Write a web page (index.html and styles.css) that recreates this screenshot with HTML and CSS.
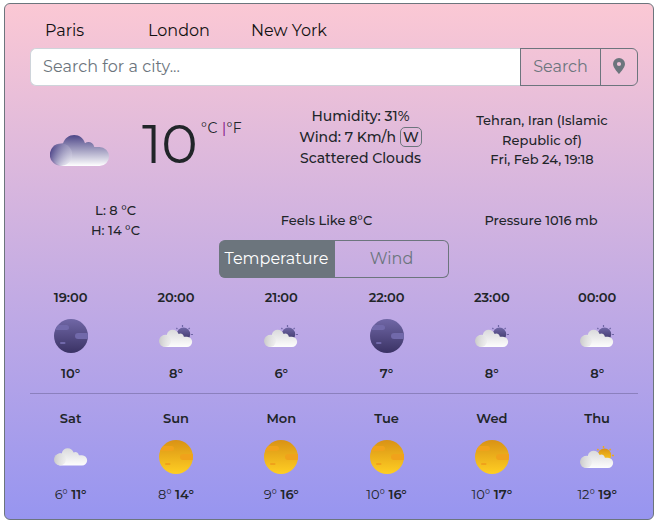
FILE: index.html
```html
<!DOCTYPE html>
<html lang="en">
<head>
<meta charset="utf-8">
<title>Weather</title>
<link rel="stylesheet" href="styles.css">
</head>
<body>
<svg class="defs" width="0" height="0" aria-hidden="true">
  <defs>
    <linearGradient id="night" x1="0" y1="0" x2="0" y2="1"><stop offset="0" stop-color="#7067a6"/><stop offset="1" stop-color="#3a3264"/></linearGradient>
    <linearGradient id="day" x1="0" y1="0" x2="0" y2="1"><stop offset="0" stop-color="#d99215"/><stop offset="1" stop-color="#ffcf23"/></linearGradient>
    <linearGradient id="white" gradientUnits="userSpaceOnUse" x1="0" y1="0" x2="0" y2="17"><stop offset="0" stop-color="#d9d9db"/><stop offset="1" stop-color="#fcfcfc"/></linearGradient>
    <linearGradient id="whiteSide"><stop offset="0" stop-color="#cacaca"/><stop offset="1" stop-color="#e9e9e9" stop-opacity=".5"/></linearGradient>
    <linearGradient id="dark" gradientUnits="userSpaceOnUse" x1="0" y1="0" x2="0" y2="31"><stop offset="0" stop-color="#4d4688"/><stop offset="1" stop-color="#ffffff"/></linearGradient>
    <linearGradient id="darkSide" x1="0" y1=".3" x2="1" y2=".65"><stop offset="0" stop-color="#463f84"/><stop offset="1" stop-color="#dcd9ea" stop-opacity=".3"/></linearGradient>
    <clipPath id="disc"><circle cx="17" cy="17" r="17"/></clipPath>
    <g id="patches" clip-path="url(#disc)"><rect x="-4" y="6" width="19" height="5" rx="2.5"/><rect x="21" y="14" width="18" height="6" rx="3"/><rect x="6" y="23" width="5.5" height="2" rx="1"/></g>
    <g id="cloud"><path fill="url(#white)" d="M6 17.5A6 6 0 0 1 7.7 5.4C8.5 2 11 .3 13.6.3c3 0 5 1.7 6 4.2 1.8-1 4.5-.7 5.3 2.7H28a5.15 5.15 0 0 1 0 10.3z"/><circle cx="6" cy="11.5" r="6" fill="url(#whiteSide)"/></g>
    <symbol id="moon" viewBox="0 0 34 34"><circle cx="17" cy="17" r="17" fill="url(#night)"/><use href="#patches" fill="#7169aa"/></symbol>
    <symbol id="sun" viewBox="0 0 34 34"><circle cx="17" cy="17" r="17" fill="url(#day)"/><use href="#patches" fill="#f0a21b"/></symbol>
    <symbol id="cloudy" viewBox="0 0 34 34"><use href="#cloud" y="8"/></symbol>
    <symbol id="cloud-night" viewBox="0 0 34 34"><path d="M23.5 6v2M17.4 9l1 1.2M30.7 9l-1.1 1.2M32 15.5h2" stroke="#7067a6" stroke-width="1.2"/><circle cx="24.5" cy="15.2" r="6.7" fill="url(#night)"/><use href="#cloud" y="10.5"/></symbol>
    <symbol id="cloud-day" viewBox="0 0 34 34"><path d="M23.5 6v2M17.4 9l1 1.2M30.7 9l-1.1 1.2M32 15.5h2" stroke="#efa91d" stroke-width="1.4"/><circle cx="24.5" cy="15.2" r="6.7" fill="url(#day)"/><use href="#cloud" y="10.5"/></symbol>
  </defs>
</svg>
<main class="card">
  <nav class="cities"><a>Paris</a><a>London</a><a>New York</a></nav>
  <form class="search">
    <input type="text" placeholder="Search for a city..." aria-label="City">
    <button type="button" class="go">Search</button>
    <button type="button" class="pin" aria-label="Current location"><svg width="12" height="16" viewBox="0 0 12 16"><path fill="currentColor" fill-rule="evenodd" d="M6 16S0 9.8 0 6a6 6 0 1 1 12 0c0 3.8-6 10-6 10zM6 8.1a2.1 2.1 0 1 0 0-4.2 2.1 2.1 0 0 0 0 4.2z"/></svg></button>
  </form>
  <section class="current">
    <svg class="now-icon" width="59" height="31" viewBox="0 0 59 31"><path fill="url(#dark)" d="M11 31A11.5 11.5 0 0 1 13 8.3C15 3 19 0 24.2 0 29.5 0 33.5 3.2 35 8.2c3-2.6 8.3-1.2 9.3 3.8H49.5a9.5 9.5 0 0 1 0 19z"/><circle cx="11" cy="19.7" r="11.2" fill="url(#darkSide)"/></svg>
    <div class="temp"><span class="degrees">10</span><span class="units">°C <i>|</i>°F</span></div>
    <div class="facts"><div>Humidity: 31%</div><div>Wind: 7 Km/h <span class="compass">W</span></div><div>Scattered Clouds</div></div>
    <div class="place"><div>Tehran, Iran (Islamic</div><div>Republic of)</div><div>Fri, Feb 24, 19:18</div></div>
  </section>
  <section class="extra">
    <div class="range"><div>L: 8 °C</div><div>H: 14 °C</div></div>
    <div class="feels">Feels Like 8°C</div>
    <div class="pressure">Pressure 1016 mb</div>
  </section>
  <div class="toggle"><button type="button" class="active">Temperature</button><button type="button">Wind</button></div>
  <section class="forecast hourly">
    <div><b>19:00</b><svg><use href="#moon"/></svg><b>10°</b></div>
    <div><b>20:00</b><svg><use href="#cloud-night"/></svg><b>8°</b></div>
    <div><b>21:00</b><svg><use href="#cloud-night"/></svg><b>6°</b></div>
    <div><b>22:00</b><svg><use href="#moon"/></svg><b>7°</b></div>
    <div><b>23:00</b><svg><use href="#cloud-night"/></svg><b>8°</b></div>
    <div><b>00:00</b><svg><use href="#cloud-night"/></svg><b>8°</b></div>
  </section>
  <hr>
  <section class="forecast daily">
    <div><b>Sat</b><svg><use href="#cloudy"/></svg><span>6° <b>11°</b></span></div>
    <div><b>Sun</b><svg><use href="#sun"/></svg><span>8° <b>14°</b></span></div>
    <div><b>Mon</b><svg><use href="#sun"/></svg><span>9° <b>16°</b></span></div>
    <div><b>Tue</b><svg><use href="#sun"/></svg><span>10° <b>16°</b></span></div>
    <div><b>Wed</b><svg><use href="#sun"/></svg><span>10° <b>17°</b></span></div>
    <div><b>Thu</b><svg><use href="#cloud-day"/></svg><span>12° <b>19°</b></span></div>
  </section>
</main>
</body>
</html>
```
FILE: styles.css
```css
* { box-sizing: border-box; }
body { margin: 0; padding: 3px 3px 3px 4px; background: #fff; color: #212529; font: 13px/20px Montserrat, Inter, "Open Sans", sans-serif; overflow: hidden; }
.defs { position: absolute; }
.card { width: 650px; height: 517px; padding: 0 15px 0 25px; border: 1px solid #6c757d; border-radius: 6px; background: linear-gradient(to top, #9795f0, #fbc8d4); }
.cities { display: grid; grid-template-columns: repeat(3, 103px); height: 44px; padding: 15px 0 0 15px; font-size: 16px; line-height: 24px; color: #111; white-space: nowrap; }
.search { display: flex; width: 608px; height: 38px; margin: 0; }
.search input { width: 490px; padding: 0 12px; border: 1px solid #ced4da; border-right: 0; border-radius: 6px 0 0 6px; font: inherit; font-size: 16px; letter-spacing: .07px; }
.search input::placeholder { color: #6c757d; opacity: 1; }
button { padding: 0; border: 1px solid #6c757d; background: transparent; color: #6c757d; font: inherit; font-size: 16px; }
.search .go { width: 81px; }
.pin { display: flex; align-items: center; justify-content: center; width: 38px; margin-left: -1px; border-radius: 0 6px 6px 0; }
.pin svg { margin-top: -2px; }
.current { display: grid; grid-template-columns: 112px 133px 171px 192px; height: 114px; padding-top: 19px; }
.now-icon { margin: 30px 0 0 20px; }
.temp { display: flex; align-items: flex-start; white-space: nowrap; }
.degrees { width: 59px; font-size: 55px; line-height: 78px; font-weight: 400; letter-spacing: -.5px; }
.units { padding-top: 13px; font-size: 14px; letter-spacing: .45px; }
.units i { color: #800080; font-style: normal; }
.facts { padding-top: 1px; font-size: 14px; line-height: 21px; font-weight: 500; text-align: center; white-space: nowrap; }
.compass { display: inline-block; width: 22px; height: 20px; border: 1px solid #6c757d; border-radius: 5px; line-height: 18px; vertical-align: top; }
.place { padding-top: 5px; font-weight: 500; text-align: center; }
.place div:last-child { margin-top: -1px; }
.extra { display: grid; grid-template-columns: 171px 251px 178px; height: 40px; font-weight: 500; text-align: center; }
.feels, .pressure { padding-top: 10px; }
.toggle { display: flex; width: 230px; height: 38px; margin-left: 189px; }
.toggle button { width: 114px; border-radius: 0 6px 6px 0; border-left: 0; }
.toggle .active { width: 116px; border-radius: 6px 0 0 6px; background: #6c757d; color: #fff; }
.forecast { display: grid; grid-template-columns: repeat(6, 105.3px); width: 632px; margin-left: -12px; text-align: center; }
.forecast > div { display: flex; flex-direction: column; align-items: center; }
.forecast svg { display: block; width: 34px; height: 34px; }
.forecast b { font-weight: 600; }
.hourly { height: 115px; padding-top: 9px; }
.hourly svg { margin: 12px 0 10px; }
hr { width: 608px; height: 1px; margin: 0; border: 0; background: #8b80bd; }
.daily { padding-top: 14px; }
.daily svg { margin: 12px 0 10px; }
```
